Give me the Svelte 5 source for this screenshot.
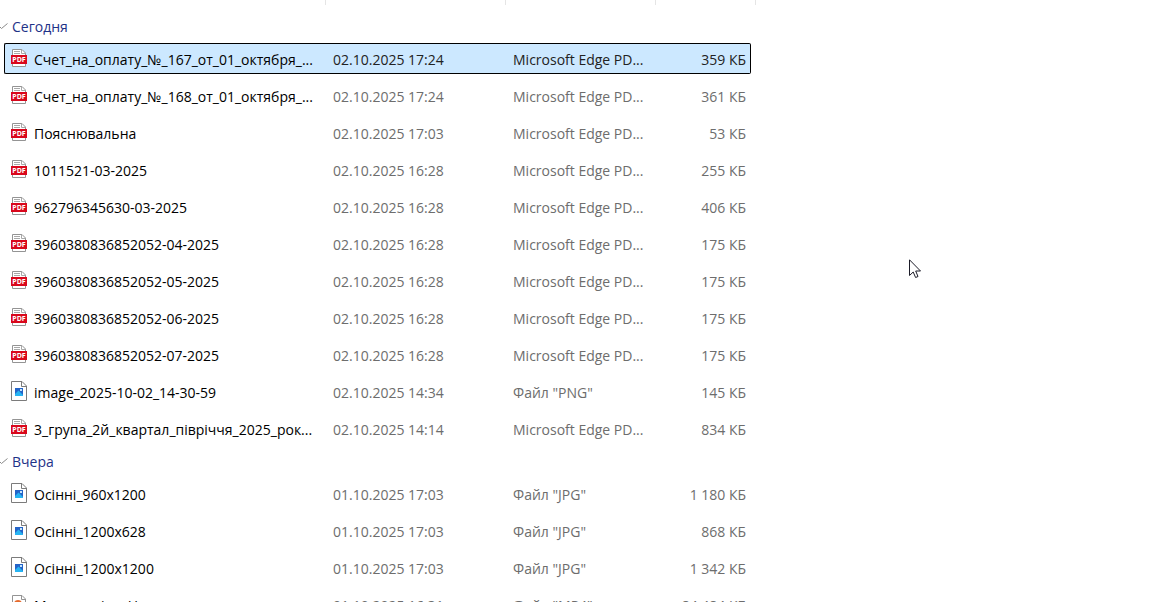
<script lang="ts">
  type FileItem = {
    name: string
    date: string
    type: string
    size: string
    icon: 'pdf' | 'image' | 'video'
  }

  const pdf = 'Microsoft Edge PD...'

  const groups: { title: string, files: FileItem[] }[] = [
    {
      title: 'Сегодня',
      files: [
        { name: 'Счет_на_оплату_№_167_от_01_октября_...', date: '02.10.2025 17:24', type: pdf, size: '359 КБ', icon: 'pdf' },
        { name: 'Счет_на_оплату_№_168_от_01_октября_...', date: '02.10.2025 17:24', type: pdf, size: '361 КБ', icon: 'pdf' },
        { name: 'Пояснювальна', date: '02.10.2025 17:03', type: pdf, size: '53 КБ', icon: 'pdf' },
        { name: '1011521-03-2025', date: '02.10.2025 16:28', type: pdf, size: '255 КБ', icon: 'pdf' },
        { name: '962796345630-03-2025', date: '02.10.2025 16:28', type: pdf, size: '406 КБ', icon: 'pdf' },
        { name: '3960380836852052-04-2025', date: '02.10.2025 16:28', type: pdf, size: '175 КБ', icon: 'pdf' },
        { name: '3960380836852052-05-2025', date: '02.10.2025 16:28', type: pdf, size: '175 КБ', icon: 'pdf' },
        { name: '3960380836852052-06-2025', date: '02.10.2025 16:28', type: pdf, size: '175 КБ', icon: 'pdf' },
        { name: '3960380836852052-07-2025', date: '02.10.2025 16:28', type: pdf, size: '175 КБ', icon: 'pdf' },
        { name: 'image_2025-10-02_14-30-59', date: '02.10.2025 14:34', type: 'Файл "PNG"', size: '145 КБ', icon: 'image' },
        { name: '3_група_2й_квартал_півріччя_2025_рок...', date: '02.10.2025 14:14', type: pdf, size: '834 КБ', icon: 'pdf' }
      ]
    },
    {
      title: 'Вчера',
      files: [
        { name: 'Осінні_960x1200', date: '01.10.2025 17:03', type: 'Файл "JPG"', size: '1 180 КБ', icon: 'image' },
        { name: 'Осінні_1200x628', date: '01.10.2025 17:03', type: 'Файл "JPG"', size: '868 КБ', icon: 'image' },
        { name: 'Осінні_1200x1200', date: '01.10.2025 17:03', type: 'Файл "JPG"', size: '1 342 КБ', icon: 'image' },
        { name: 'Модна_осінь_Нова', date: '01.10.2025 16:31', type: 'Файл "MP4"', size: '84 484 КБ', icon: 'video' }
      ]
    }
  ]

  let selected = $state(groups[0].files[0].name)
  let closed: string[] = $state([])

  function toggle(title: string) {
    closed = closed.includes(title) ? closed.filter((t) => t !== title) : [...closed, title]
  }
</script>

<main class="explorer">
  <div class="columns">
    <span class="name"></span>
    <span class="date"></span>
    <span class="type"></span>
    <span class="size"></span>
  </div>

  <table>
    <colgroup>
      <col class="name" />
      <col class="date" />
      <col class="type" />
      <col class="size" />
    </colgroup>
    {#each groups as group}
      <tbody>
        <tr>
          <th colspan="4">
            <button onclick={() => toggle(group.title)}>
              <svg class="chevron" width="10" height="8" viewBox="0 0 10 8" aria-hidden="true">
                <path d="M-1 2L2.500 5.500L8.500 0.500" />
              </svg>
              {group.title}
            </button>
          </th>
        </tr>
        {#if !closed.includes(group.title)}
          {#each group.files as file}
            <tr class:selected={selected === file.name} onclick={() => (selected = file.name)}>
              <td>
                <div class="label">
                  {#if file.icon === 'pdf'}
                    <svg width="16" height="20" viewBox="0 0 16 20" aria-hidden="true">
                      <path d="M1.500 7V1.500H11L14.500 5V18.500H1.500V7" fill="#fff" stroke="#949494" />
                      <path d="M10.500 1.500V5.500H14.500M3 3.500H9M3 5.500H9" fill="none" stroke="#a8a8a8" />
                      <rect y="7" width="16" height="9" fill="#d9071c" />
                      <text x="8" y="14" text-anchor="middle">PDF</text>
                    </svg>
                  {:else if file.icon === 'image'}
                    <svg width="16" height="20" viewBox="0 0 16 20" aria-hidden="true">
                      <path d="M0.500 0.500H11L15.500 5V19.500H0.500Z" fill="#fff" stroke="#7b7b7b" />
                      <path d="M10.500 0.500V5.500H15.500" fill="none" stroke="#7b7b7b" />
                      <rect x="4" y="7" width="8" height="8" fill="#2464c8" />
                      <path d="M4 13L7.500 9.500L12 14V15H4Z" fill="#27b4f2" />
                      <rect x="9" y="8" width="2" height="2" fill="#c4e4fb" />
                    </svg>
                  {:else}
                    <svg width="16" height="20" viewBox="0 0 16 20" aria-hidden="true">
                      <path d="M1.500 1.500H11L14.500 5V18.500H1.500Z" fill="#fff" stroke="#949494" />
                      <path d="M10.500 1.500V5.500H14.500" fill="none" stroke="#949494" />
                      <circle cx="7" cy="10" r="4" fill="#e66a2c" />
                      <path d="M6 8L9 10L6 12Z" fill="#fff" />
                    </svg>
                  {/if}
                  <span>{file.name}</span>
                </div>
              </td>
              <td>{file.date}</td>
              <td>{file.type}</td>
              <td class="amount">{file.size}</td>
            </tr>
          {/each}
        {/if}
      </tbody>
    {/each}
  </table>

  <svg class="pointer" width="12" height="20" viewBox="0 0 12 20" aria-hidden="true">
    <path d="M0.500 0.800V16.500L4.200 13L6.600 18.500L9 17.500L6.700 12H11.500Z" />
  </svg>
</main>

<style>
  :global(body) {
    margin: 0;
    background: #fff;
  }

  .explorer {
    position: relative;
    height: 100vh;
    overflow: hidden;
    font-family: "Open Sans", "Noto Sans", sans-serif;
    font-size: 14px;
    line-height: 24px;
    color: #6d6d6d;
    cursor: default;
  }

  .columns {
    display: flex;
    height: 5px;
    padding-left: 4px;
  }

  .columns span {
    box-sizing: border-box;
    border-right: 1px solid #e5e5e5;
  }

  .name {
    width: 322px;
  }

  .date {
    width: 180px;
  }

  .type {
    width: 150px;
  }

  .size {
    width: 95px;
  }

  .columns .size {
    width: 100px;
  }

  table {
    width: 747px;
    margin: 4px 0 0 4px;
    table-layout: fixed;
    border-collapse: separate;
    border-spacing: 0 6px;
  }

  th {
    height: 22px;
    padding: 0;
    text-align: left;
  }

  button {
    display: flex;
    align-items: center;
    gap: 3px;
    margin-left: -5px;
    padding: 2px 0 0;
    border: 0;
    background: none;
    font: inherit;
    font-weight: 400;
    line-height: 20px;
    color: #1e3287;
  }

  .chevron {
    fill: none;
    stroke: #8a8a8a;
  }

  td {
    box-sizing: border-box;
    height: 31px;
    padding: 4px 0 0 7px;
    border: solid transparent;
    border-width: 1px 0;
    vertical-align: top;
    white-space: nowrap;
  }

  td:first-child {
    padding-left: 6px;
    border-left-width: 1px;
    border-radius: 2px 0 0 2px;
  }

  td:last-child {
    border-right-width: 1px;
    border-radius: 0 2px 2px 0;
  }

  .amount {
    padding: 4px 4px 0 0;
    text-align: right;
  }

  .selected td {
    background: #cce8ff;
    border-color: #000;
    color: #222;
  }

  .label {
    display: flex;
    align-items: flex-start;
    gap: 7px;
    color: #000;
  }

  .label svg {
    flex: none;
  }

  .label text {
    font: bold 7px "Open Sans", sans-serif;
    fill: #fff;
  }

  .pointer {
    position: absolute;
    top: 259px;
    left: 909px;
    fill: #fff;
    stroke: #1c1c28;
  }
</style>
